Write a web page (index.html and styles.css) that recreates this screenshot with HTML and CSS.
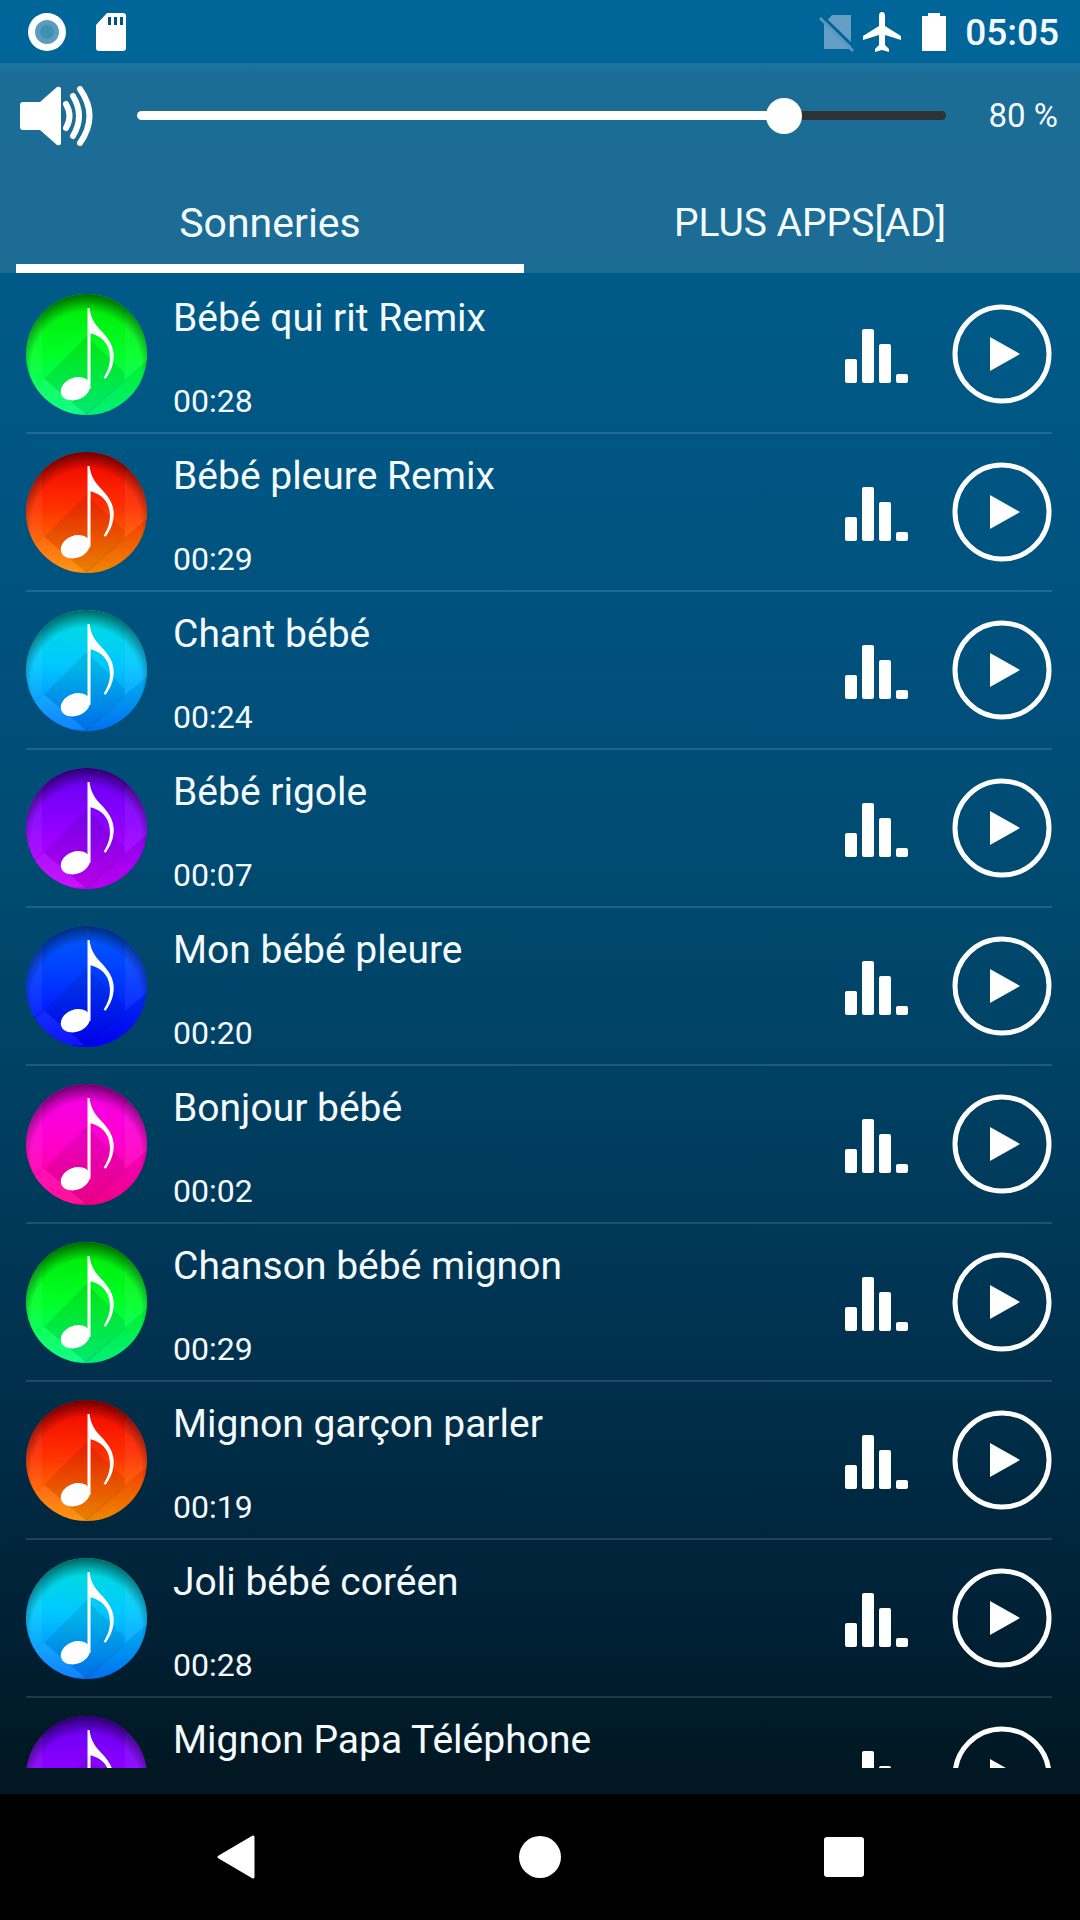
FILE: index.html
```html
<!DOCTYPE html>
<html lang="fr">
<head>
<meta charset="utf-8">
<meta name="viewport" content="width=device-width, initial-scale=1">
<title>Sonneries bébé</title>
<link rel="stylesheet" href="styles.css">
</head>
<body>
<svg class="defs" aria-hidden="true">
  <defs>
    <radialGradient id="shade" cx=".5" cy=".6" r=".6">
      <stop offset=".76" stop-color="#000" stop-opacity="0"/>
      <stop offset="1" stop-color="#000" stop-opacity=".55"/>
    </radialGradient>
    <clipPath id="disc"><circle cx="60" cy="60" r="60"/></clipPath>
  </defs>
  <symbol id="note" viewBox="0 0 120 120">
    <g clip-path="url(#disc)">
      <path d="M18 84 60 42 98 78V86L60 120Z" fill="#000" opacity=".09"/>
      <path d="M57 120 120 66V120Z" fill="#000" opacity=".06"/>
      <path d="M16 20V84L0 96V0ZM98 20v64l22-18V0Z" fill="#fff" opacity=".06"/>
      <path d="M58 118 18 84 0 98V120Z" fill="#fff" opacity=".07"/>
      <circle cx="60" cy="60" r="60" fill="url(#shade)"/>
    </g>
    <ellipse cx="49" cy="94" rx="15" ry="11" transform="rotate(-22 49 94)" fill="#fff"/>
    <path d="M61 14H63C64 23 68 30 74 36C83 45 87 53 87 61C87 70 84 77 79 84L77 83C82 75 84 68 83 60C82 49 75 42 64 39V94H61Z" fill="#fff"/>
  </symbol>
  <symbol id="bars" viewBox="0 0 64 54">
    <g fill="#fff"><rect y="30" width="12" height="24" rx="2"/><rect x="17" width="12" height="54" rx="2"/><rect x="34" y="15" width="12" height="39" rx="2"/><rect x="51" y="45" width="12" height="9" rx="2"/></g>
  </symbol>
  <symbol id="play" viewBox="0 0 100 100">
    <circle cx="50" cy="50" r="47" fill="none" stroke="#fff" stroke-width="5"/>
    <path d="M38 33V67L68 50Z" fill="#fff"/>
  </symbol>
</svg>

<header class="status">
  <svg width="40" height="40" viewBox="0 0 40 40"><circle cx="20" cy="20" r="19" fill="#fff"/><circle cx="20" cy="20" r="12" fill="#5b9cc2"/><circle cx="20" cy="20" r="7" fill="#3d92b0"/></svg>
  <svg class="sd" width="32" height="40" viewBox="0 0 32 40"><path d="M12 1H28Q31 1 31 4V36Q31 39 28 39H4Q1 39 1 36V13Z" fill="#fff"/><path d="M13 5h3v8h-3zM19 5h3v8h-3zM25 5h3v8h-3z" fill="#045080"/></svg>
  <span class="spacer"></span>
  <svg width="36" height="40" viewBox="0 0 36 40"><path d="M13 3H32V37H5V12Z" fill="#669fc5"/><path d="M4 5 36 36" stroke="#006496" stroke-width="3"/><path d="M1 6 34 39" stroke="#5a98c0" stroke-width="3"/></svg>
  <svg class="plane" width="38" height="40" viewBox="0 0 38 40"><path d="M16 4Q16 0 19 0T22 4V14L38 24V28L22 23V33L26 37V40L19 38 12 40V37L16 33V23L0 28V24L16 14Z" fill="#fff"/></svg>
  <svg class="battery" width="26" height="40" viewBox="0 0 26 40"><path d="M7 1H19V4H25V39H1V4H7Z" fill="#fff"/></svg>
  <time class="clock">05:05</time>
</header>

<div class="top">
  <div class="volume">
    <svg width="74" height="60" viewBox="0 0 74 60" aria-hidden="true"><path d="M3 16H20L37 1Q41 0 41 3V57Q41 60 37 59L20 44H3Q0 44 0 41V19Q0 16 3 16Z" fill="#fff"/><path d="M46 18Q53 30 46 42M53 10Q65 30 53 50M60 3Q79 30 60 57" fill="none" stroke="#fff" stroke-width="6" stroke-linecap="round"/></svg>
    <div class="slider">
      <span class="track"><span class="fill" style="width:80%"></span></span>
      <input type="range" id="volume" min="0" max="100" value="80" aria-label="Volume">
    </div>
    <output class="level" for="volume">80 %</output>
  </div>
  <nav class="tabs">
    <button class="tab active" type="button">Sonneries</button>
    <button class="tab" type="button">PLUS APPS[AD]</button>
  </nav>
</div>

<main class="scroll">
  <ul class="list">
    <li class="row"><span class="disc green"><svg><use href="#note"/></svg></span><div class="info"><h2>Bébé qui rit Remix</h2><p>00:28</p></div><svg class="bars"><use href="#bars"/></svg><button class="play" type="button" aria-label="Lire"><svg><use href="#play"/></svg></button></li>
    <li class="row"><span class="disc orange"><svg><use href="#note"/></svg></span><div class="info"><h2>Bébé pleure Remix</h2><p>00:29</p></div><svg class="bars"><use href="#bars"/></svg><button class="play" type="button" aria-label="Lire"><svg><use href="#play"/></svg></button></li>
    <li class="row"><span class="disc cyan"><svg><use href="#note"/></svg></span><div class="info"><h2>Chant bébé</h2><p>00:24</p></div><svg class="bars"><use href="#bars"/></svg><button class="play" type="button" aria-label="Lire"><svg><use href="#play"/></svg></button></li>
    <li class="row"><span class="disc purple"><svg><use href="#note"/></svg></span><div class="info"><h2>Bébé rigole</h2><p>00:07</p></div><svg class="bars"><use href="#bars"/></svg><button class="play" type="button" aria-label="Lire"><svg><use href="#play"/></svg></button></li>
    <li class="row"><span class="disc blue"><svg><use href="#note"/></svg></span><div class="info"><h2>Mon bébé pleure</h2><p>00:20</p></div><svg class="bars"><use href="#bars"/></svg><button class="play" type="button" aria-label="Lire"><svg><use href="#play"/></svg></button></li>
    <li class="row"><span class="disc pink"><svg><use href="#note"/></svg></span><div class="info"><h2>Bonjour bébé</h2><p>00:02</p></div><svg class="bars"><use href="#bars"/></svg><button class="play" type="button" aria-label="Lire"><svg><use href="#play"/></svg></button></li>
    <li class="row"><span class="disc green"><svg><use href="#note"/></svg></span><div class="info"><h2>Chanson bébé mignon</h2><p>00:29</p></div><svg class="bars"><use href="#bars"/></svg><button class="play" type="button" aria-label="Lire"><svg><use href="#play"/></svg></button></li>
    <li class="row"><span class="disc orange"><svg><use href="#note"/></svg></span><div class="info"><h2>Mignon garçon parler</h2><p>00:19</p></div><svg class="bars"><use href="#bars"/></svg><button class="play" type="button" aria-label="Lire"><svg><use href="#play"/></svg></button></li>
    <li class="row"><span class="disc cyan"><svg><use href="#note"/></svg></span><div class="info"><h2>Joli bébé coréen</h2><p>00:28</p></div><svg class="bars"><use href="#bars"/></svg><button class="play" type="button" aria-label="Lire"><svg><use href="#play"/></svg></button></li>
    <li class="row"><span class="disc purple"><svg><use href="#note"/></svg></span><div class="info"><h2>Mignon Papa Téléphone</h2></div><svg class="bars"><use href="#bars"/></svg><button class="play" type="button" aria-label="Lire"><svg><use href="#play"/></svg></button></li>
  </ul>
</main>

<footer class="navbar">
  <button type="button" aria-label="Retour"><svg viewBox="0 0 44 44"><path d="M39 2V42L5 22Z" fill="#fff" stroke="#fff" stroke-width="3" stroke-linejoin="round"/></svg></button>
  <button type="button" aria-label="Accueil"><svg viewBox="0 0 44 44"><circle cx="22" cy="22" r="21" fill="#fff"/></svg></button>
  <button type="button" aria-label="Récents"><svg viewBox="0 0 44 44"><rect x="2" y="2" width="40" height="40" rx="3" fill="#fff"/></svg></button>
</footer>
</body>
</html>
```
FILE: styles.css
```css
* { box-sizing: border-box; }

body {
  margin: 0;
  height: 100vh;
  display: flex;
  flex-direction: column;
  overflow: hidden;
  font-family: Roboto, "Liberation Sans", sans-serif;
  color: #f4fbff;
  background: linear-gradient(#006699 0%, #006598 3%, #005b8a 4%, #005a87 15%, #00507c 35%, #004a70 46%, #004163 56%, #003452 68%, #002a43 77%, #002034 85%, #011823 92%, #011823 100%);
}

button {
  margin: 0;
  padding: 0;
  border: 0;
  background: none;
  color: inherit;
  font: inherit;
}

svg { display: block; flex: none; }

h2, p, ul { margin: 0; padding: 0; font-weight: 400; }

.defs { position: absolute; width: 0; height: 0; }

/* Status bar */
.status {
  display: flex;
  align-items: center;
  height: 63px;
  padding: 0 21px 0 27px;
}
.sd { margin-left: 28px; }
.spacer { flex: 1; }
.plane { margin-left: 8px; }
.battery { margin-left: 20px; }
.clock {
  margin-left: 18px;
  padding-top: 3px;
  font-size: 37px;
  font-weight: 500;
  line-height: 48px;
}

/* Volume and tabs */
.top { background: rgba(255, 255, 255, .11); }

.volume {
  display: flex;
  align-items: center;
  height: 105px;
  padding: 0 22px 0 20px;
}
.slider {
  flex: 1;
  display: grid;
  align-items: center;
  margin: 0 25px;
}
.slider > * { grid-area: 1 / 1; }
.track {
  height: 9px;
  margin: 0 18px;
  border-radius: 5px;
  background: #2f3335;
}
.fill {
  display: block;
  height: 100%;
  border-radius: 5px;
  background: #fff;
}
.slider input {
  appearance: none;
  width: 100%;
  height: 36px;
  margin: 0;
  background: none;
}
.slider input::-webkit-slider-thumb {
  appearance: none;
  width: 36px;
  height: 36px;
  border-radius: 50%;
  background: #fff;
}
.level { font-size: 33px; line-height: 40px; }

.tabs { display: grid; grid-template-columns: 1fr 1fr; }
.tab {
  height: 105px;
  margin: 0 16px;
  padding-top: 14px;
  border-bottom: 9px solid transparent;
  font-size: 39px;
  line-height: 48px;
}
.tab.active { border-color: #fff; font-size: 41px; }

/* Ringtones */
.scroll {
  flex: 1;
  min-height: 0;
  padding-top: 3px;
  margin-bottom: 26px;
  overflow: hidden;
}
.list { list-style: none; padding: 0 28px 0 26px; }
.row {
  display: flex;
  align-items: center;
  height: 158px;
  border-bottom: 2px solid rgba(255, 255, 255, .13);
}
.disc {
  width: 121px;
  height: 121px;
  border-radius: 50%;
}
.disc svg { width: 100%; height: 100%; }
.green { background: linear-gradient(#00e800, #00ff28 50%, #00ff80); }
.orange { background: linear-gradient(#f00000, #ff3000 45%, #ff9000); }
.cyan { background: linear-gradient(#00e0d8, #00c8ff 45%, #0078ff); }
.purple { background: linear-gradient(#6400f0, #8c00ff 45%, #c800ff); }
.blue { background: linear-gradient(#0060ff, #0038ff 45%, #0000ff); }
.pink { background: linear-gradient(#f000e8, #ff00d0 45%, #ff0090); }

.info {
  flex: 1;
  align-self: flex-start;
  display: grid;
  gap: 39px;
  padding: 18px 0 0 26px;
}
.info h2 { font-size: 39px; line-height: 48px; }
.info p { font-size: 32px; line-height: 40px; }

.bars { width: 64px; height: 54px; margin: 4px 43px 0 0; }
.play, .play svg { width: 100px; height: 100px; }

/* System navigation */
.navbar {
  display: flex;
  justify-content: center;
  align-items: center;
  gap: 260px;
  height: 126px;
  background: #000;
}
.navbar svg { width: 44px; height: 44px; }
```
